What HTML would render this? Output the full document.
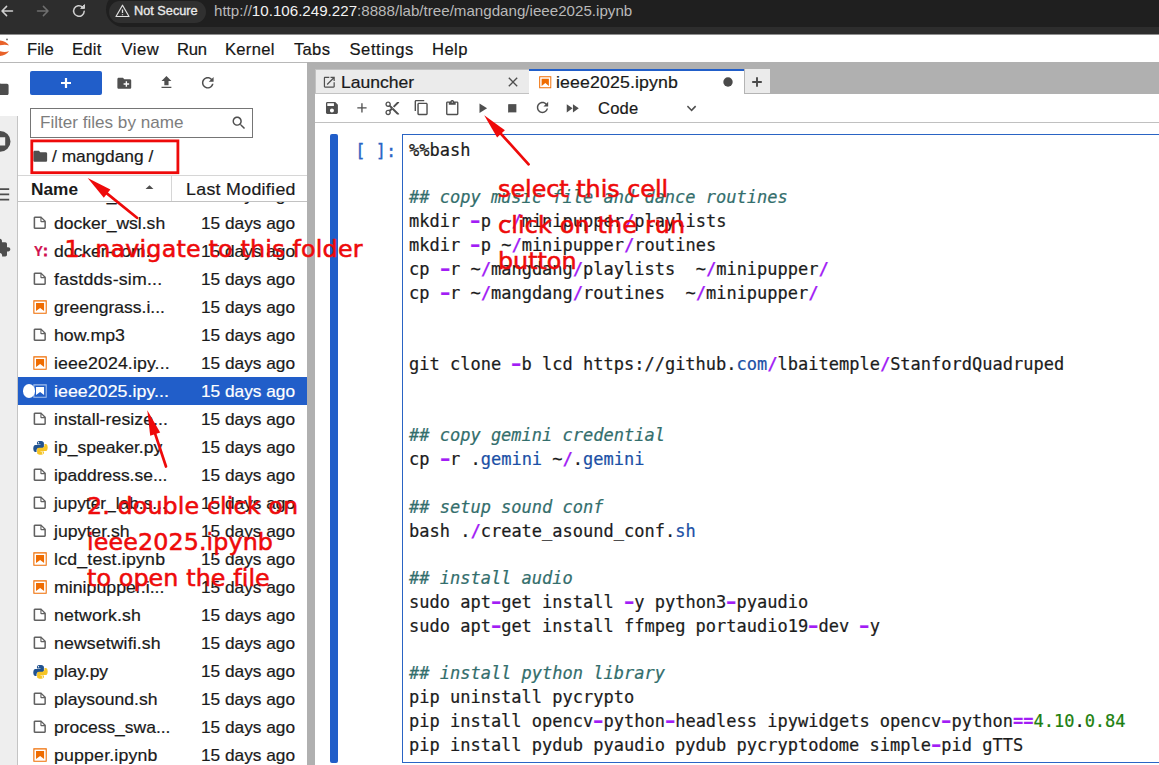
<!DOCTYPE html>
<html lang="en">
<head>
<meta charset="utf-8">
<title>ieee2025.ipynb - JupyterLab</title>
<style>
*{box-sizing:border-box;margin:0;padding:0}
html,body{width:1159px;height:765px;overflow:hidden;background:#fff}
body{position:relative;font-family:"Liberation Sans",sans-serif;color:#111;font-size:16px}
.abs{position:absolute}
svg{display:block}
/* browser chrome */
#chrome{left:0;top:0;width:1159px;height:35px;background:#2d2d2d;border-bottom:1px solid #8f8f8f}
#pill{left:105.5px;top:-8px;width:1100px;height:35.200px;background:#1f1f1f;border-radius:17.500px}
#chip{left:109px;top:0.500px;width:96.500px;height:22px;background:#303030;border-radius:11px}
#chiptxt{left:134px;top:2px;font-size:13.4px;color:#e9e9e9;line-height:18px;white-space:nowrap;-webkit-text-stroke:0.35px #e9e9e9;transform-origin:0 50%;transform:scaleX(.95)}
#url{left:214px;top:1px;font-size:14.6px;color:#b9b9b9;line-height:20px;white-space:nowrap;transform-origin:0 50%;transform:scaleX(1.037)}
#url b{font-weight:normal;color:#f2f2f2}
/* menu */
#menubar{left:0;top:35px;width:1159px;height:28px;background:#fff;border-bottom:1px solid #b8b8b8}
.mi{position:absolute;top:40px;font-size:16.6px;line-height:20px;color:#161616;white-space:nowrap;-webkit-text-stroke:.2px #161616}
/* left sidebar */
#lside{left:0;top:63px;width:18px;height:702px;background:#eeeeee;border-right:1px solid #c4c4c4}
#lside0{left:0;top:63px;width:18px;height:53px;background:#fff}
/* file browser */
#fb{left:18px;top:63px;width:289px;height:702px;background:#fff}
#newbtn{left:30px;top:71px;width:72px;height:24px;background:#215ec9;border-radius:2px}
#filter{left:30px;top:108px;width:223px;height:30px;border:1px solid #757575;background:#fff}
#filter span{position:absolute;left:9px;top:3.700px;font-size:16.6px;line-height:20px;color:#7d7d7d;white-space:nowrap;transform-origin:0 50%;transform:scaleX(1.03)}
#crumb{left:51.5px;top:147px;font-size:16.6px;line-height:20px;color:#1a1a1a;white-space:nowrap;-webkit-text-stroke:.2px;transform-origin:0 50%;transform:scaleX(1.045)}
#hdr{left:18px;top:175px;width:289px;height:27px;border-top:1px solid #d6d6d6;border-bottom:1px solid #c2c2c2;background:#fff}
#hdrsep{left:171px;top:176px;width:1px;height:25px;background:#d6d6d6}
#list{left:18px;top:202px;width:289px;height:563px;overflow:hidden}
.row{position:absolute;left:0;width:289px;height:28px;font-size:16.6px;line-height:29.600px;color:#1a1a1a;white-space:nowrap;-webkit-text-stroke:.2px}
.row .nm{position:absolute;left:36.4px;top:0;transform-origin:0 50%}
.row .dt{position:absolute;left:183.2px;top:0;transform-origin:0 50%;transform:scaleX(1.04)}
.row .ic{position:absolute;left:14px;top:6.3px;width:15.5px;height:15.5px}
.row .nbi{left:14.3px;top:5.800px;width:16.100px;height:16.100px}
.row .pyi{left:14.5px;top:6.500px;width:15px;height:15px}
.row .yml{position:absolute;left:15.600px;top:0;font-weight:bold;font-size:14px;line-height:29.600px;color:#d0114f;transform-origin:0 50%;transform:scaleX(.95)}
.row .yml i{font-style:normal;-webkit-text-stroke:.9px #d0114f;margin-left:.5px}
.row .chk{position:absolute;left:4.700px;top:6.800px;width:12.700px;height:14.200px;border-radius:50%;background:#fff;z-index:2}
.row.sel{background:#215ec9;color:#fff}
/* dock */
#dock{left:307px;top:62px;width:852px;height:703px;background:#b0b0b0}
#tabL{left:315px;top:69px;width:214px;height:25px;background:#ebebeb;border:1px solid #c2c2c2;border-right:none}
#tabA{left:529px;top:69px;width:215px;height:25px;background:#fff;border-top:2px solid #215ec9}
#tabP{left:744px;top:69px;width:25.500px;height:24.500px;background:#ebebeb;border-left:1px solid #b4b4b4;border-bottom:1px solid #b4b4b4}
.tabtxt{position:absolute;font-size:16.6px;line-height:20px;color:#1a1a1a;white-space:nowrap;-webkit-text-stroke:.2px #1a1a1a}
#nbtool{left:315px;top:94px;width:844px;height:29px;background:#fff;border-bottom:1px solid #c0c0c0}
#nb{left:315px;top:123px;width:844px;height:642px;background:#fff}
#collapser{left:330px;top:134px;width:8px;height:629px;background:#215ec9;border-radius:2px}
#prompt{left:355.300px;top:138.800px;-webkit-text-stroke:.3px;font-family:"DejaVu Sans Mono","Liberation Mono",monospace;font-size:17px;line-height:24px;color:#2a64c4;white-space:pre}
#editor{left:402px;top:134px;width:760px;height:629px;border:1px solid #2a64c4;background:#fff}
#code{left:409px;top:138.800px;font-family:"DejaVu Sans Mono","Liberation Mono",monospace;font-size:17px;line-height:23.8px;color:#1c1c1c;white-space:pre;-webkit-text-stroke:.22px}
#code .c{color:#336e6c;font-style:italic}
#code .o,#code .d{color:#a21df5;font-weight:bold}
#code .d{display:inline-block;transform:scaleX(1.5)}
#code .p{color:#1b50a6}
#code .n{color:#1d7f0e}
#hname{left:30.5px;top:180px;font-size:16.6px;font-weight:bold;line-height:20px;color:#1a1a1a;transform-origin:0 50%;transform:scaleX(1.04)}
#hmod{left:186px;top:180px;font-size:16.6px;line-height:20px;color:#1a1a1a;white-space:nowrap;-webkit-text-stroke:.2px;transform-origin:0 50%;transform:scaleX(1.07);letter-spacing:.3px}
/* annotations */
.red{position:absolute;font-family:"DejaVu Sans","Liberation Sans",sans-serif;color:#ee0a0a;white-space:nowrap;font-size:23.8px;line-height:36px;-webkit-text-stroke:0.55px #ee0a0a}
#redrect{left:30.4px;top:139.500px;width:149px;height:34.600px;border:2.800px solid #ee0a0a}
</style>
</head>
<body>
<!-- browser chrome -->
<div id="chrome" class="abs"></div>
<div id="pill" class="abs"></div>
<div id="chip" class="abs"></div>
<svg class="abs" style="left:0;top:0" width="110" height="26" viewBox="0 0 110 26" fill="none" stroke-linecap="round" stroke-linejoin="round">
  <path d="M12.5 11H2.200M6.600 6.400L2 11l4.600 4.600" stroke="#d0d0d0" stroke-width="1.500"/>
  <path d="M37.500 11h10.300M43.400 6.400L48 11l-4.600 4.600" stroke="#6f6f6f" stroke-width="1.500"/>
  <path d="M84.200 11.200a5.300 5.300 0 1 1-1.700-4.100" stroke="#d0d0d0" stroke-width="1.500"/>
  <path d="M84.500 5v3.400h-3.400z" fill="#d0d0d0" stroke="#d0d0d0" stroke-width="1"/>
</svg>
<svg class="abs" style="left:115px;top:4px" width="15" height="14" viewBox="0 0 15 14" fill="none" stroke="#e0e0e0" stroke-width="1.200" stroke-linejoin="round"><path d="M7.500 1.200L14 12.500H1z"/><path d="M7.500 5.500v3.600M7.500 10.300v.9" stroke-width="1.300"/></svg>
<div id="chiptxt" class="abs">Not Secure</div>
<div id="url" class="abs">http://<b>10.106.249.227</b>:8888/lab/tree/mangdang/ieee2025.ipynb</div>

<!-- menu bar -->
<div id="menubar" class="abs"></div>
<svg class="abs" style="left:0;top:34px" width="12" height="28" viewBox="0 34 12 28"><path d="M-4 40.700C1 39.900 6.500 41.500 9.100 45.500C5.500 44 1 44.600-4 46.600zM-4 55.900C1 56.700 6.500 55.100 9.100 51.100C5.500 52.600 1 52-4 50z" fill="#e8622a"/><circle cx="7" cy="39.400" r="0.850" fill="#555"/></svg>
<div class="mi" style="left:27px">File</div>
<div class="mi" style="left:72px;letter-spacing:.25px">Edit</div>
<div class="mi" style="left:121.5px;letter-spacing:.5px">View</div>
<div class="mi" style="left:177px;letter-spacing:-.2px">Run</div>
<div class="mi" style="left:225px;letter-spacing:.28px">Kernel</div>
<div class="mi" style="left:294px;letter-spacing:.3px">Tabs</div>
<div class="mi" style="left:349.5px;letter-spacing:.55px">Settings</div>
<div class="mi" style="left:432px;letter-spacing:.45px">Help</div>

<!-- left sidebar -->
<div id="lside" class="abs"></div>
<div id="lside0" class="abs"></div>

<!-- file browser -->
<div id="fb" class="abs"></div>
<div id="newbtn" class="abs"></div>
<div id="filter" class="abs"><span>Filter files by name</span></div>
<div id="crumb" class="abs">/ mangdang /</div>
<div id="hdr" class="abs"></div>
<div id="hdrsep" class="abs"></div>
<div id="list" class="abs">
<div class="row" style="top:-21px"><svg class="ic" viewBox="0 0 22 22"><path fill="#616161" d="M19.300 8.200l-5.500-5.500c-.3-.3-.7-.5-1.200-.5H3.900c-.8.100-1.600.9-1.600 1.800v14.100c0 .9.700 1.700 1.700 1.700h14c.9 0 1.700-.7 1.700-1.700V9.400c.1-.5-.1-.9-.4-1.200zm-5.800-3.300l3.400 3.600h-3.400V4.900zm3.900 12.700H4.700c-.1 0-.2 0-.2-.2V4.700c0-.2.100-.3.200-.3h7.200v4.400s0 .8.300 1.100c.3.300 1.100.3 1.100.3h4.300v7.200s-.1.200-.2.200z"/></svg><span class="nm" style="transform:scaleX(1.057);letter-spacing:0.00px">docker_run.sh</span><span class="dt">15 days ago</span></div>
<div class="row" style="top:7px"><svg class="ic" viewBox="0 0 22 22"><path fill="#616161" d="M19.300 8.200l-5.500-5.500c-.3-.3-.7-.5-1.200-.5H3.900c-.8.100-1.600.9-1.600 1.800v14.100c0 .9.700 1.700 1.700 1.700h14c.9 0 1.700-.7 1.700-1.700V9.400c.1-.5-.1-.9-.4-1.200zm-5.800-3.300l3.400 3.600h-3.400V4.900zm3.900 12.700H4.700c-.1 0-.2 0-.2-.2V4.700c0-.2.100-.3.200-.3h7.200v4.400s0 .8.300 1.100c.3.300 1.100.3 1.100.3h4.300v7.200s-.1.200-.2.200z"/></svg><span class="nm" style="transform:scaleX(1.057);letter-spacing:0.00px">docker_wsl.sh</span><span class="dt">15 days ago</span></div>
<div class="row" style="top:35px"><span class="yml">Y<i>:</i></span><span class="nm" style="transform:scaleX(1.058);letter-spacing:0.00px">docker-com...</span><span class="dt">15 days ago</span></div>
<div class="row" style="top:63px"><svg class="ic" viewBox="0 0 22 22"><path fill="#616161" d="M19.300 8.200l-5.500-5.500c-.3-.3-.7-.5-1.200-.5H3.900c-.8.100-1.600.9-1.600 1.800v14.100c0 .9.700 1.700 1.700 1.700h14c.9 0 1.700-.7 1.700-1.700V9.400c.1-.5-.1-.9-.4-1.200zm-5.800-3.300l3.400 3.600h-3.400V4.900zm3.900 12.700H4.700c-.1 0-.2 0-.2-.2V4.700c0-.2.100-.3.200-.3h7.200v4.400s0 .8.300 1.100c.3.300 1.100.3 1.100.3h4.300v7.200s-.1.200-.2.200z"/></svg><span class="nm" style="transform:scaleX(1.068);letter-spacing:0.20px">fastdds-sim...</span><span class="dt">15 days ago</span></div>
<div class="row" style="top:91px"><svg class="ic nbi" viewBox="0 0 22 22"><path fill="#ef6c00" d="M18.700 3.300v15.400H3.300V3.300h15.400m1.500-1.500H1.800v18.300h18.300l.1-18.300z"/><path fill="#ef6c00" d="M16.500 16.500l-5.400-4.300-5.600 4.300v-11h11z"/></svg><span class="nm" style="transform:scaleX(1.055);letter-spacing:0.00px">greengrass.i...</span><span class="dt">15 days ago</span></div>
<div class="row" style="top:119px"><svg class="ic" viewBox="0 0 22 22"><path fill="#616161" d="M19.300 8.200l-5.500-5.500c-.3-.3-.7-.5-1.200-.5H3.900c-.8.100-1.600.9-1.600 1.800v14.100c0 .9.700 1.700 1.700 1.700h14c.9 0 1.700-.7 1.700-1.700V9.400c.1-.5-.1-.9-.4-1.200zm-5.800-3.300l3.400 3.600h-3.400V4.900zm3.900 12.700H4.700c-.1 0-.2 0-.2-.2V4.700c0-.2.100-.3.200-.3h7.200v4.400s0 .8.300 1.100c.3.300 1.100.3 1.100.3h4.300v7.200s-.1.200-.2.200z"/></svg><span class="nm" style="transform:scaleX(1.068);letter-spacing:0.00px">how.mp3</span><span class="dt">15 days ago</span></div>
<div class="row" style="top:147px"><svg class="ic nbi" viewBox="0 0 22 22"><path fill="#ef6c00" d="M18.700 3.300v15.400H3.300V3.300h15.400m1.500-1.500H1.800v18.300h18.300l.1-18.300z"/><path fill="#ef6c00" d="M16.500 16.500l-5.400-4.300-5.600 4.300v-11h11z"/></svg><span class="nm" style="transform:scaleX(1.068);letter-spacing:0.11px">ieee2024.ipy...</span><span class="dt">15 days ago</span></div>
<div class="row sel" style="top:175px"><span class="chk"></span><svg class="ic nbi" viewBox="0 0 22 22"><path fill="#a6c1ec" d="M18.700 3.300v15.400H3.300V3.300h15.400m1.500-1.500H1.800v18.300h18.300l.1-18.300z"/><path fill="#fff" d="M16.500 16.500l-5.400-4.300-5.600 4.300v-11h11z"/></svg><span class="nm" style="transform:scaleX(1.068);letter-spacing:0.07px">ieee2025.ipy...</span><span class="dt">15 days ago</span></div>
<div class="row" style="top:203px"><svg class="ic" viewBox="0 0 22 22"><path fill="#616161" d="M19.300 8.200l-5.500-5.500c-.3-.3-.7-.5-1.200-.5H3.900c-.8.100-1.600.9-1.600 1.800v14.100c0 .9.700 1.700 1.700 1.700h14c.9 0 1.700-.7 1.700-1.700V9.400c.1-.5-.1-.9-.4-1.200zm-5.800-3.300l3.400 3.600h-3.400V4.900zm3.900 12.700H4.700c-.1 0-.2 0-.2-.2V4.700c0-.2.100-.3.200-.3h7.200v4.400s0 .8.300 1.100c.3.300 1.100.3 1.100.3h4.300v7.200s-.1.200-.2.200z"/></svg><span class="nm" style="transform:scaleX(1.068);letter-spacing:0.04px">install-resize...</span><span class="dt">15 days ago</span></div>
<div class="row" style="top:231px"><svg class="ic pyi" viewBox="0 0 22 22"><path fill="#21528f" d="M10.900 1.500c-1.600 0-3 .2-3.900.7-1 .5-1.200 1.300-1.200 2.300v2.100h5.200v.8H3.900c-1.500 0-2.700.9-3.100 2.600-.5 2-.5 3.200 0 5.200.4 1.500 1.200 2.300 2.700 2.300h1.700v-2.400c0-1.700 1.500-3.100 3.200-3.100h5.100c1.400 0 2.500-1.200 2.500-2.600V4.500c0-1.400-1.200-2.400-2.500-2.700-.9-.2-1.800-.3-2.600-.3zM8.100 3.100c.5 0 1 .4 1 1s-.5 1-1 1-1-.4-1-1 .4-1 1-1z"/><path fill="#f5c425" d="M16.800 7.400v2.300c0 1.800-1.500 3.200-3.200 3.200H8.500c-1.400 0-2.500 1.200-2.500 2.600v4.800c0 1.400 1.200 2.200 2.500 2.600 1.600.5 3.100.5 5.100 0 1.300-.4 2.500-1.100 2.500-2.600v-1.900H11v-.7h7.700c1.500 0 2-1 2.500-2.600.5-1.600.5-3.100 0-5.200-.4-1.500-1.100-2.600-2.500-2.600h-1.900zm-2.900 12.300c.5 0 1 .4 1 1s-.5 1-1 1-1-.4-1-1 .5-1 1-1z" transform="translate(0 -1.600)"/></svg><span class="nm" style="transform:scaleX(1.057);letter-spacing:0.00px">ip_speaker.py</span><span class="dt">15 days ago</span></div>
<div class="row" style="top:259px"><svg class="ic" viewBox="0 0 22 22"><path fill="#616161" d="M19.300 8.200l-5.500-5.500c-.3-.3-.7-.5-1.200-.5H3.900c-.8.100-1.600.9-1.600 1.800v14.100c0 .9.700 1.700 1.700 1.700h14c.9 0 1.700-.7 1.700-1.700V9.400c.1-.5-.1-.9-.4-1.200zm-5.800-3.300l3.400 3.600h-3.400V4.900zm3.900 12.700H4.700c-.1 0-.2 0-.2-.2V4.700c0-.2.100-.3.200-.3h7.200v4.400s0 .8.300 1.100c.3.300 1.100.3 1.100.3h4.300v7.200s-.1.200-.2.200z"/></svg><span class="nm" style="transform:scaleX(1.051);letter-spacing:0.00px">ipaddress.se...</span><span class="dt">15 days ago</span></div>
<div class="row" style="top:287px"><svg class="ic" viewBox="0 0 22 22"><path fill="#616161" d="M19.300 8.200l-5.500-5.500c-.3-.3-.7-.5-1.200-.5H3.900c-.8.100-1.600.9-1.600 1.800v14.100c0 .9.700 1.700 1.700 1.700h14c.9 0 1.700-.7 1.700-1.700V9.400c.1-.5-.1-.9-.4-1.200zm-5.800-3.300l3.400 3.600h-3.400V4.900zm3.900 12.700H4.700c-.1 0-.2 0-.2-.2V4.700c0-.2.100-.3.200-.3h7.200v4.400s0 .8.300 1.100c.3.300 1.100.3 1.100.3h4.300v7.200s-.1.200-.2.200z"/></svg><span class="nm" style="transform:scaleX(1.045);letter-spacing:0.00px">jupyter_lab.s...</span><span class="dt">15 days ago</span></div>
<div class="row" style="top:315px"><svg class="ic" viewBox="0 0 22 22"><path fill="#616161" d="M19.300 8.200l-5.500-5.500c-.3-.3-.7-.5-1.200-.5H3.900c-.8.100-1.600.9-1.600 1.800v14.100c0 .9.700 1.700 1.700 1.700h14c.9 0 1.700-.7 1.700-1.700V9.400c.1-.5-.1-.9-.4-1.200zm-5.800-3.300l3.400 3.600h-3.400V4.900zm3.900 12.700H4.700c-.1 0-.2 0-.2-.2V4.700c0-.2.100-.3.200-.3h7.200v4.400s0 .8.300 1.100c.3.300 1.100.3 1.100.3h4.300v7.200s-.1.200-.2.200z"/></svg><span class="nm" style="transform:scaleX(1.065);letter-spacing:0.00px">jupyter.sh</span><span class="dt">15 days ago</span></div>
<div class="row" style="top:343px"><svg class="ic nbi" viewBox="0 0 22 22"><path fill="#ef6c00" d="M18.700 3.300v15.400H3.300V3.300h15.400m1.500-1.500H1.800v18.300h18.300l.1-18.300z"/><path fill="#ef6c00" d="M16.500 16.500l-5.400-4.300-5.600 4.300v-11h11z"/></svg><span class="nm" style="transform:scaleX(1.068);letter-spacing:0.19px">lcd_test.ipynb</span><span class="dt">15 days ago</span></div>
<div class="row" style="top:371px"><svg class="ic nbi" viewBox="0 0 22 22"><path fill="#ef6c00" d="M18.700 3.300v15.400H3.300V3.300h15.400m1.500-1.500H1.800v18.300h18.300l.1-18.300z"/><path fill="#ef6c00" d="M16.500 16.500l-5.400-4.300-5.600 4.300v-11h11z"/></svg><span class="nm" style="transform:scaleX(1.068);letter-spacing:0.01px">minipupper.i...</span><span class="dt">15 days ago</span></div>
<div class="row" style="top:399px"><svg class="ic" viewBox="0 0 22 22"><path fill="#616161" d="M19.300 8.200l-5.500-5.500c-.3-.3-.7-.5-1.200-.5H3.900c-.8.100-1.600.9-1.600 1.800v14.100c0 .9.700 1.700 1.700 1.700h14c.9 0 1.700-.7 1.700-1.700V9.400c.1-.5-.1-.9-.4-1.200zm-5.800-3.300l3.400 3.600h-3.400V4.900zm3.900 12.700H4.700c-.1 0-.2 0-.2-.2V4.700c0-.2.100-.3.200-.3h7.200v4.400s0 .8.300 1.100c.3.300 1.100.3 1.100.3h4.300v7.200s-.1.200-.2.200z"/></svg><span class="nm" style="transform:scaleX(1.068);letter-spacing:0.13px">network.sh</span><span class="dt">15 days ago</span></div>
<div class="row" style="top:427px"><svg class="ic" viewBox="0 0 22 22"><path fill="#616161" d="M19.300 8.200l-5.500-5.500c-.3-.3-.7-.5-1.200-.5H3.900c-.8.100-1.600.9-1.600 1.800v14.100c0 .9.700 1.700 1.700 1.700h14c.9 0 1.700-.7 1.700-1.700V9.400c.1-.5-.1-.9-.4-1.200zm-5.800-3.300l3.400 3.600h-3.400V4.900zm3.900 12.700H4.700c-.1 0-.2 0-.2-.2V4.700c0-.2.100-.3.200-.3h7.200v4.400s0 .8.300 1.100c.3.300 1.100.3 1.100.3h4.300v7.200s-.1.200-.2.200z"/></svg><span class="nm" style="transform:scaleX(1.068);letter-spacing:0.09px">newsetwifi.sh</span><span class="dt">15 days ago</span></div>
<div class="row" style="top:455px"><svg class="ic pyi" viewBox="0 0 22 22"><path fill="#21528f" d="M10.900 1.500c-1.600 0-3 .2-3.900.7-1 .5-1.200 1.300-1.200 2.300v2.100h5.200v.8H3.900c-1.500 0-2.700.9-3.100 2.600-.5 2-.5 3.200 0 5.200.4 1.500 1.200 2.300 2.700 2.300h1.700v-2.400c0-1.700 1.500-3.100 3.200-3.100h5.100c1.400 0 2.500-1.200 2.500-2.600V4.500c0-1.400-1.200-2.400-2.500-2.700-.9-.2-1.800-.3-2.600-.3zM8.100 3.100c.5 0 1 .4 1 1s-.5 1-1 1-1-.4-1-1 .4-1 1-1z"/><path fill="#f5c425" d="M16.800 7.400v2.300c0 1.800-1.500 3.200-3.200 3.200H8.500c-1.400 0-2.500 1.200-2.500 2.600v4.800c0 1.400 1.200 2.200 2.500 2.600 1.600.5 3.100.5 5.100 0 1.300-.4 2.500-1.100 2.500-2.600v-1.900H11v-.7h7.700c1.500 0 2-1 2.500-2.600.5-1.600.5-3.100 0-5.200-.4-1.500-1.100-2.600-2.500-2.600h-1.900zm-2.900 12.300c.5 0 1 .4 1 1s-.5 1-1 1-1-.4-1-1 .5-1 1-1z" transform="translate(0 -1.600)"/></svg><span class="nm" style="transform:scaleX(1.054);letter-spacing:0.00px">play.py</span><span class="dt">15 days ago</span></div>
<div class="row" style="top:483px"><svg class="ic" viewBox="0 0 22 22"><path fill="#616161" d="M19.300 8.200l-5.500-5.500c-.3-.3-.7-.5-1.200-.5H3.900c-.8.100-1.600.9-1.600 1.800v14.100c0 .9.700 1.700 1.700 1.700h14c.9 0 1.700-.7 1.700-1.700V9.400c.1-.5-.1-.9-.4-1.200zm-5.800-3.300l3.400 3.600h-3.400V4.900zm3.900 12.700H4.700c-.1 0-.2 0-.2-.2V4.700c0-.2.100-.3.200-.3h7.200v4.400s0 .8.300 1.100c.3.300 1.100.3 1.100.3h4.300v7.200s-.1.200-.2.200z"/></svg><span class="nm" style="transform:scaleX(1.059);letter-spacing:0.00px">playsound.sh</span><span class="dt">15 days ago</span></div>
<div class="row" style="top:511px"><svg class="ic" viewBox="0 0 22 22"><path fill="#616161" d="M19.300 8.200l-5.500-5.500c-.3-.3-.7-.5-1.200-.5H3.900c-.8.100-1.600.9-1.600 1.800v14.100c0 .9.700 1.700 1.700 1.700h14c.9 0 1.700-.7 1.700-1.700V9.400c.1-.5-.1-.9-.4-1.200zm-5.800-3.300l3.400 3.600h-3.400V4.900zm3.900 12.700H4.700c-.1 0-.2 0-.2-.2V4.700c0-.2.100-.3.200-.3h7.200v4.400s0 .8.300 1.100c.3.300 1.100.3 1.100.3h4.300v7.200s-.1.200-.2.200z"/></svg><span class="nm" style="transform:scaleX(1.052);letter-spacing:0.00px">process_swa...</span><span class="dt">15 days ago</span></div>
<div class="row" style="top:539px"><svg class="ic nbi" viewBox="0 0 22 22"><path fill="#ef6c00" d="M18.700 3.300v15.400H3.300V3.300h15.400m1.500-1.500H1.800v18.300h18.300l.1-18.300z"/><path fill="#ef6c00" d="M16.500 16.500l-5.400-4.300-5.600 4.300v-11h11z"/></svg><span class="nm" style="transform:scaleX(1.068);letter-spacing:0.16px">pupper.ipynb</span><span class="dt">15 days ago</span></div>
</div>

<!-- dock -->
<div id="dock" class="abs"></div>
<div id="tabL" class="abs"></div>
<div id="tabA" class="abs"></div>
<div id="tabP" class="abs"></div>
<div class="tabtxt" style="left:340.5px;top:72.700px;transform-origin:0 50%;transform:scaleX(1.058)">Launcher</div>
<div class="tabtxt" style="left:555.5px;top:72.700px;transform-origin:0 50%;transform:scaleX(1.068);letter-spacing:.12px">ieee2025.ipynb</div>
<div id="nbtool" class="abs"></div>
<div id="nb" class="abs"></div>
<div id="collapser" class="abs"></div>
<div id="prompt" class="abs">[ ]:</div>
<div id="editor" class="abs"></div>
<pre id="code" class="abs">%%bash

<span class="c">## copy music file and dance routines</span>
mkdir <span class="d">-</span>p ~<span class="o">/</span>minipupper<span class="o">/</span>playlists
mkdir <span class="d">-</span>p ~<span class="o">/</span>minipupper<span class="o">/</span>routines
cp <span class="d">-</span>r ~<span class="o">/</span>mangdang<span class="o">/</span>playlists  ~<span class="o">/</span>minipupper<span class="o">/</span>
cp <span class="d">-</span>r ~<span class="o">/</span>mangdang<span class="o">/</span>routines  ~<span class="o">/</span>minipupper<span class="o">/</span>


git clone <span class="d">-</span>b lcd https://github.<span class="p">com</span><span class="o">/</span>lbaitemple<span class="o">/</span>StanfordQuadruped


<span class="c">## copy gemini credential</span>
cp <span class="d">-</span>r .<span class="p">gemini</span> ~<span class="o">/</span>.<span class="p">gemini</span>

<span class="c">## setup sound conf</span>
bash .<span class="o">/</span>create_asound_conf.<span class="p">sh</span>

<span class="c">## install audio</span>
sudo apt<span class="d">-</span>get install <span class="d">-</span>y python3<span class="d">-</span>pyaudio
sudo apt<span class="d">-</span>get install ffmpeg portaudio19<span class="d">-</span>dev <span class="d">-</span>y

<span class="c">## install python library</span>
pip uninstall pycrypto
pip install opencv<span class="d">-</span>python<span class="d">-</span>headless ipywidgets opencv<span class="d">-</span>python<span class="o">==</span><span class="n">4.10</span>.<span class="n">0.84</span>
pip install pydub pyaudio pydub pycryptodome simple<span class="d">-</span>pid gTTS</pre>

<!-- icons -->
<svg class="abs" style="left:60px;top:77px" width="12" height="12" viewBox="0 0 12 12"><path d="M4.900 1h2.200v3.900H11v2.200H7.100V11H4.900V7.100H1V4.900h3.900z" fill="#fff"/></svg>
<svg class="abs" style="left:115.80px;top:74.50px" width="16.6" height="16.6" viewBox="0 0 24 24" fill="#4f4f4f"><path d="M20 6h-8l-2-2H4c-1.110 0-1.990.89-1.990 2L2 18c0 1.110.89 2 2 2h16c1.110 0 2-.89 2-2V8c0-1.110-.89-2-2-2zm-1 8h-3v3h-2v-3h-3v-2h3V9h2v3h3v2z"/></svg>
<svg class="abs" style="left:157.65px;top:74.35px" width="16.9" height="16.9" viewBox="0 0 24 24" fill="#4f4f4f"><path d="M9 16h6v-6h4l-7-7-7 7h4zm-4 2h14v2H5z"/></svg>
<svg class="abs" style="left:198.55px;top:74.25px" width="17.5" height="17.5" viewBox="0 0 18 18" fill="#4f4f4f"><path d="M9 13.500c-2.490 0-4.500-2.010-4.500-4.500S6.510 4.500 9 4.500c1.240 0 2.360.52 3.170 1.330L10 8h5V3l-1.760 1.760C12.150 3.680 10.660 3 9 3 5.690 3 3.010 5.690 3.010 9S5.690 15 9 15c2.970 0 5.430-2.160 5.900-5h-1.520c-.46 2-2.240 3.500-4.380 3.500z"/></svg>
<svg class="abs" style="left:230.90px;top:115.40px" width="15.6" height="15.6" viewBox="0 0 18 18" fill="#4f4f4f"><path d="M12.100 10.900h-.7l-.2-.2c.8-.9 1.300-2.200 1.300-3.500 0-3-2.400-5.400-5.400-5.400S1.800 4.200 1.800 7.100s2.400 5.400 5.400 5.400c1.300 0 2.500-.5 3.500-1.300l.2.200v.7l4.100 4.100 1.200-1.200-4.100-4.100zm-5 0c-2.100 0-3.700-1.700-3.700-3.700s1.700-3.700 3.700-3.700 3.700 1.700 3.700 3.700-1.600 3.700-3.700 3.700z"/></svg>
<svg class="abs" style="left:31.75px;top:147.75px" width="16.5" height="16.5" viewBox="0 0 24 24" fill="#4f4f4f"><path d="M10 4H4c-1.100 0-1.990.9-1.990 2L2 18c0 1.100.9 2 2 2h16c1.100 0 2-.9 2-2V8c0-1.100-.9-2-2-2h-8l-2-2z"/></svg>
<svg class="abs" style="left:139.80px;top:177.80px" width="19" height="19" viewBox="0 0 24 24" fill="#4f4f4f"><path d="M7 14l5-5 5 5z"/></svg>
<svg class="abs" style="left:322.30px;top:74.70px" width="14.6" height="14.6" viewBox="0 0 24 24" fill="#4f4f4f"><path d="M19 19H5V5h7V3H5c-1.110 0-2 .9-2 2v14c0 1.100.89 2 2 2h14c1.100 0 2-.9 2-2v-7h-2v7zM14 3v2h3.590l-9.830 9.830 1.410 1.410L19 6.410V10h2V3h-7z"/></svg>
<svg class="abs" style="left:505.00px;top:74.00px" width="16" height="16" viewBox="0 0 24 24" fill="#4f4f4f"><path d="M19 6.410L17.590 5 12 10.590 6.410 5 5 6.410 10.590 12 5 17.590 6.410 19 12 13.410 17.590 19 19 17.590 13.410 12z"/></svg>
<svg class="abs" style="left:537.75px;top:74.75px" width="14.5" height="14.5" viewBox="0 0 22 22" fill="#ef6c00"><path d="M18.700 3.300v15.400H3.300V3.300h15.400m1.500-1.500H1.800v18.300h18.300l.1-18.300z"/><path d="M16.500 16.500l-5.400-4.300-5.600 4.300v-11h11z"/></svg>
<svg class="abs" style="left:722px;top:76px" width="12" height="12" viewBox="0 0 12 12"><circle cx="6" cy="6" r="4.700" fill="#4a4a4a"/></svg>
<svg class="abs" style="left:751px;top:75.500px" width="12" height="12" viewBox="0 0 12 12"><path d="M5.050 1.200h1.900v3.850H10.800v1.900H6.950V10.800H5.050V6.950H1.200V5.050h3.850z" fill="#4a4a4a"/></svg>
<svg class="abs" style="left:324.05px;top:99.85px" width="15.9" height="15.9" viewBox="0 0 24 24" fill="#4f4f4f"><path d="M17 3H5c-1.110 0-2 .9-2 2v14c0 1.100.89 2 2 2h14c1.100 0 2-.9 2-2V7l-4-4zm-5 16c-1.660 0-3-1.340-3-3s1.340-3 3-3 3 1.340 3 3-1.340 3-3 3zm3-10H5V5h10v4z"/></svg>
<svg class="abs" style="left:353.85px;top:99.85px" width="15.9" height="15.9" viewBox="0 0 24 24" fill="#4f4f4f"><path d="M19 13h-6v6h-2v-6H5v-2h6V5h2v6h6v2z"/></svg>
<svg class="abs" style="left:383.75px;top:99.55px" width="16.5" height="16.5" viewBox="0 0 24 24" fill="#4f4f4f"><path d="M9.640 7.640c.23-.5.36-1.050.36-1.640 0-2.210-1.790-4-4-4S2 3.790 2 6s1.790 4 4 4c.59 0 1.140-.13 1.640-.36L10 12l-2.360 2.360C7.140 14.130 6.590 14 6 14c-2.210 0-4 1.790-4 4s1.790 4 4 4 4-1.790 4-4c0-.59-.13-1.140-.36-1.640L12 14l7 7h3v-1L9.640 7.640zM6 8c-1.100 0-2-.89-2-2s.9-2 2-2 2 .89 2 2-.9 2-2 2zm0 12c-1.100 0-2-.89-2-2s.9-2 2-2 2 .89 2 2-.9 2-2 2zm6-7.500c-.28 0-.5-.22-.5-.5s.22-.5.5-.5.5.22.5.5-.22.5-.5.5zM19 3l-6 6 2 2 7-7V3z"/></svg>
<svg class="abs" style="left:412.80px;top:99.30px" width="17" height="17" viewBox="0 0 18 18" fill="#4f4f4f"><path d="M11.900 1H3.200C2.400 1 1.700 1.700 1.700 2.500v10.200h1.500V2.500h8.700V1zM14.100 3.900h-8c-.8 0-1.500.7-1.500 1.500v10.200c0 .8.700 1.500 1.500 1.500h8c.8 0 1.500-.7 1.500-1.500V5.400c-.1-.8-.7-1.500-1.500-1.500zm0 11.600h-8V5.400h8v10.100z"/></svg>
<svg class="abs" style="left:443.75px;top:99.55px" width="16.5" height="16.5" viewBox="0 0 24 24" fill="#4f4f4f"><path d="M19 2h-4.180C14.400.84 13.300 0 12 0c-1.300 0-2.400.84-2.820 2H5c-1.100 0-2 .9-2 2v16c0 1.100.9 2 2 2h14c1.100 0 2-.9 2-2V4c0-1.100-.9-2-2-2zm-7 0c.55 0 1 .45 1 1s-.45 1-1 1-1-.45-1-1 .45-1 1-1zm7 18H5V4h2v3h10V4h2v16z"/></svg>
<svg class="abs" style="left:473.75px;top:99.55px" width="16.5" height="16.5" viewBox="0 0 24 24" fill="#4f4f4f"><path d="M8 5v14l11-7z"/></svg>
<svg class="abs" style="left:503.75px;top:99.55px" width="16.5" height="16.5" viewBox="0 0 24 24" fill="#4f4f4f"><path d="M6 6h12v12H6z"/></svg>
<svg class="abs" style="left:533.50px;top:99.30px" width="17" height="17" viewBox="0 0 18 18" fill="#4f4f4f"><path d="M9 13.500c-2.490 0-4.500-2.010-4.500-4.500S6.510 4.500 9 4.500c1.240 0 2.360.52 3.170 1.330L10 8h5V3l-1.760 1.760C12.150 3.680 10.660 3 9 3 5.690 3 3.010 5.690 3.010 9S5.690 15 9 15c2.970 0 5.430-2.160 5.900-5h-1.520c-.46 2-2.240 3.500-4.380 3.500z"/></svg>
<svg class="abs" style="left:563.75px;top:99.55px" width="16.5" height="16.5" viewBox="0 0 24 24" fill="#4f4f4f"><path d="M4 18l8.500-6L4 6v12zm9-12v12l8.500-6L13 6z"/></svg>
<svg class="abs" style="left:682.50px;top:100.00px" width="17" height="17" viewBox="0 0 18 18" fill="#4f4f4f"><path d="M5.200 5.900L9 9.700l3.800-3.800 1.200 1.200-4.900 5-4.900-5L5.200 5.900z"/></svg>
<div class="tabtxt" style="left:598px;top:98.800px;letter-spacing:.15px">Code</div>
<div class="abs" id="hname">Name</div><div class="abs" id="hmod">Last Modified</div>
<svg class="abs" style="left:-8.70px;top:79.40px" width="19.2" height="19.2" viewBox="0 0 24 24" fill="#4d4d4d"><path d="M10 4H4c-1.100 0-1.990.9-1.990 2L2 18c0 1.100.9 2 2 2h16c1.100 0 2-.9 2-2V8c0-1.100-.9-2-2-2h-8l-2-2z"/></svg>
<svg class="abs" style="left:0;top:128px" width="14" height="28" viewBox="0 128 14 28"><path fill="#4d4d4d" fill-rule="evenodd" d="M0.100 131a10.400 10.400 0 1 1 0 20.800a10.400 10.400 0 1 1 0-20.800zM-5 137.200h10.200v8.400H-5z"/></svg>
<svg class="abs" style="left:-9.40px;top:184.30px" width="20.8" height="20.8" viewBox="0 0 24 24" fill="#4d4d4d"><path d="M7 5h14v2H7zM7 13v-2h14v2zM4 4.500A1.500 1.500 0 0 1 5.500 6 1.500 1.500 0 0 1 4 7.500 1.500 1.500 0 0 1 2.500 6 1.500 1.500 0 0 1 4 4.500zM4 10.500A1.500 1.500 0 0 1 5.500 12 1.500 1.500 0 0 1 4 13.500 1.500 1.500 0 0 1 2.500 12 1.500 1.500 0 0 1 4 10.500zM7 19v-2h14v2zM4 16.500A1.500 1.500 0 0 1 5.500 18 1.500 1.500 0 0 1 4 19.500 1.500 1.500 0 0 1 2.500 18 1.500 1.500 0 0 1 4 16.500z"/></svg>
<svg class="abs" style="left:-9.30px;top:237.90px" width="20.2" height="20.2" viewBox="0 0 24 24" fill="#4d4d4d"><path d="M20.500 11H19V7c0-1.100-.9-2-2-2h-4V3.500C13 2.120 11.880 1 10.500 1S8 2.120 8 3.500V5H4c-1.100 0-1.990.9-1.990 2v3.800H3.500c1.490 0 2.700 1.210 2.700 2.700s-1.210 2.700-2.700 2.700H2V20c0 1.100.9 2 2 2h3.800v-1.500c0-1.490 1.210-2.700 2.700-2.700 1.490 0 2.700 1.210 2.700 2.700V22H17c1.100 0 2-.9 2-2v-4h1.500c1.380 0 2.500-1.120 2.500-2.500S21.880 11 20.500 11z"/></svg>
<!-- /icons -->
<!-- annotations -->
<svg class="abs ann" style="left:0;top:0" width="1159" height="765" viewBox="0 0 1159 765"><rect x="31.800" y="140.900" width="146.100" height="31.800" fill="none" stroke="#ee0a0a" stroke-width="2.800"/><line x1="137.0" y1="217.8" x2="105.6" y2="192.4" stroke="#ee0a0a" stroke-width="2.7" stroke-linecap="round"/><polygon points="87.7,177.9 110.4,189.5 103.8,197.7" fill="#ee0a0a"/><line x1="166.0" y1="466.5" x2="154.6" y2="432.1" stroke="#ee0a0a" stroke-width="2.7" stroke-linecap="round"/><polygon points="147.3,410.3 160.2,432.4 150.2,435.7" fill="#ee0a0a"/><line x1="528.6" y1="164.3" x2="499.6" y2="132.3" stroke="#ee0a0a" stroke-width="2.7" stroke-linecap="round"/><polygon points="484.2,115.3 504.9,130.3 497.1,137.4" fill="#ee0a0a"/></svg>
<div class="red" style="left:64.4px;top:231px;letter-spacing:.19px">1. navigate to this folder</div>
<div class="red" style="left:87px;top:487.800px;letter-spacing:.1px">2. double click on<br>ieee2025.ipynb<br>to open the file</div>
<div class="red" style="left:498px;top:170.700px">select this cell<br><span style="letter-spacing:.18px">click on the run</span><br>button</div>
</body>
</html>
